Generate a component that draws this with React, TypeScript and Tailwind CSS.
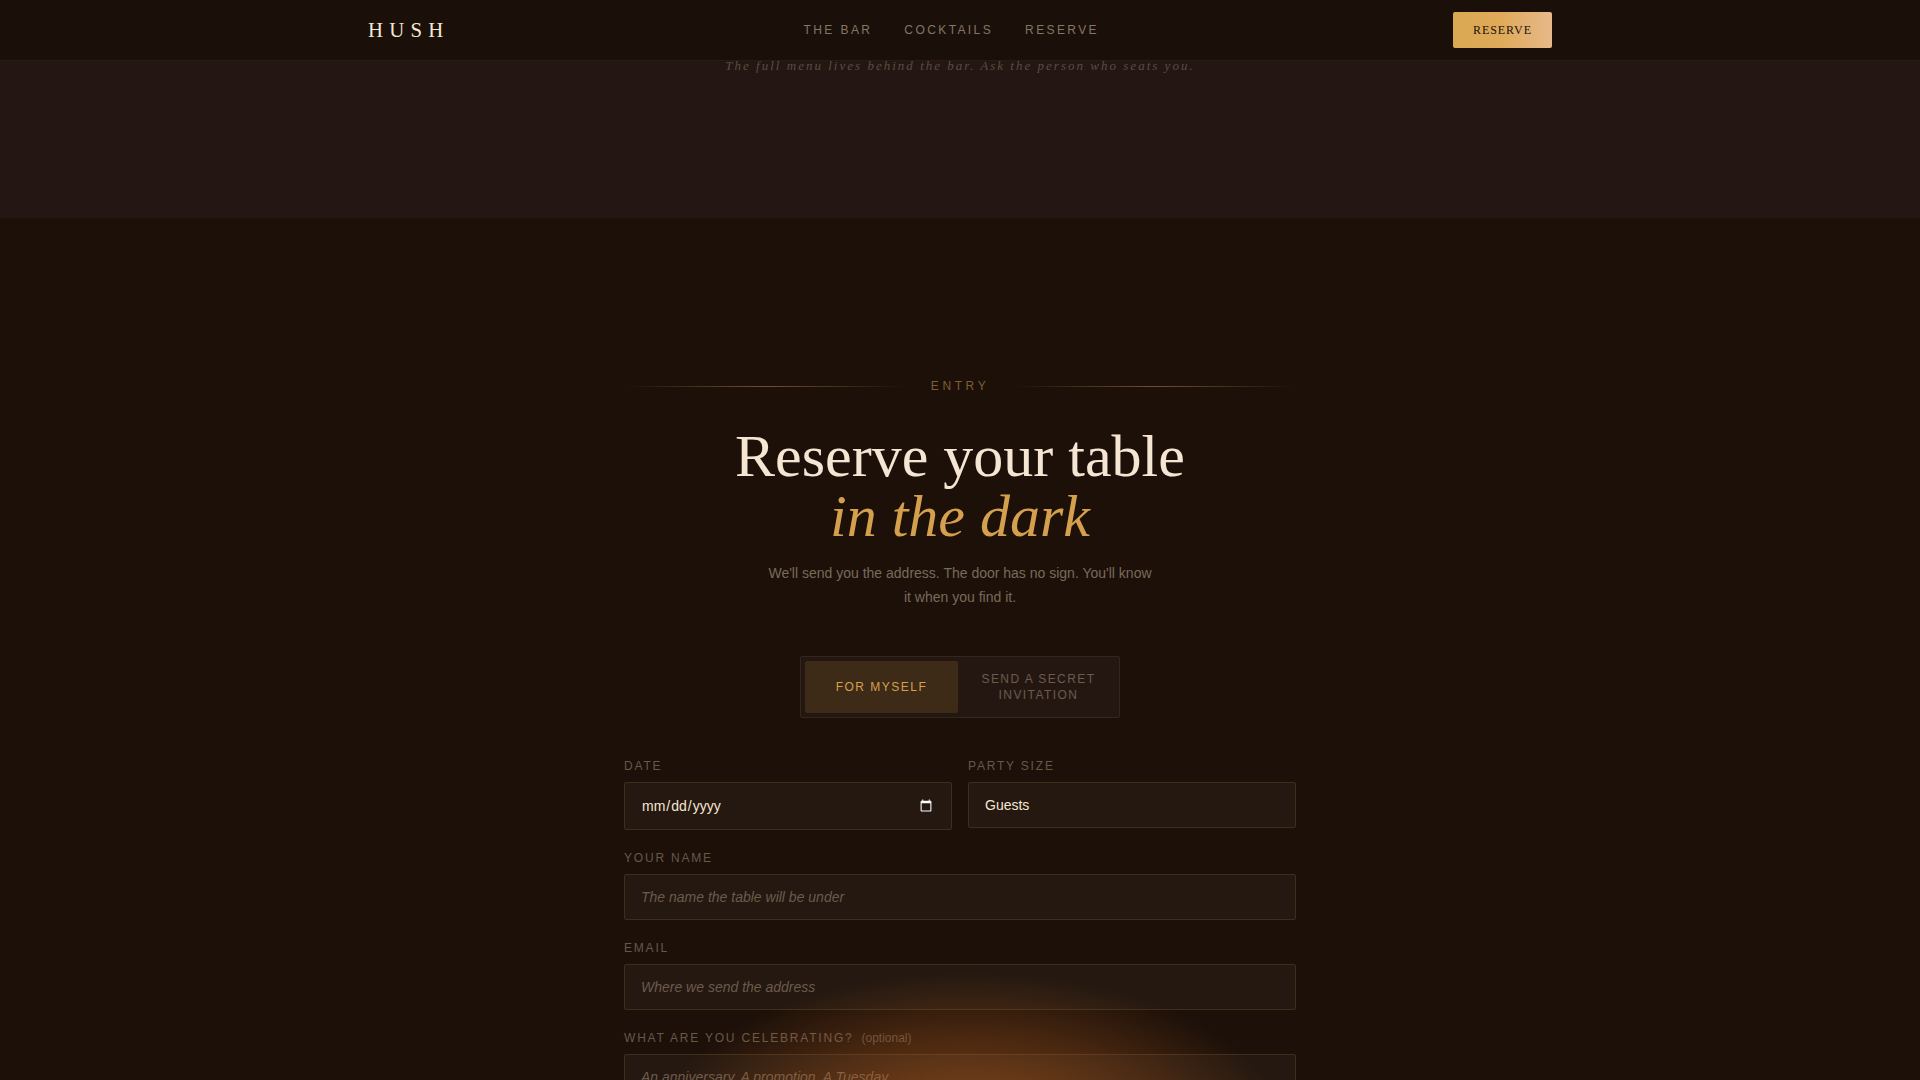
import React from 'react';

const sans = 'font-["Liberation_Sans",Arial,sans-serif]';
const serif = 'font-["Liberation_Serif","Times_New_Roman",serif]';

const labelClass = `block h-4 mb-2 text-[12px] leading-4 tracking-[0.15em] uppercase text-[#675849] ${sans}`;
const fieldClass = `block w-full bg-[#241810] border border-[#3d2e1b] rounded-[2px] px-4 py-3.5 text-[14px] leading-4 text-[#f5e6d3] outline-none placeholder:italic placeholder:text-[#6b5b4d] ${sans}`;

const App: React.FC = () => {
  return (
    <div className={`relative h-screen overflow-hidden bg-[#1c1009] ${sans}`}>
      <nav className="h-[61px] border-b border-[#2a1c10] bg-[#1b1009]">
        <div className="mx-auto flex h-[60px] w-[1184px] items-center justify-between">
          <a className={`text-[20.8px] tracking-[0.3em] text-[#f5e6d3] ${serif}`}>HUSH</a>
          <div className="flex gap-8 text-[12px] tracking-[0.2em] text-[#857565]">
            <a>THE BAR</a>
            <a>COCKTAILS</a>
            <a>RESERVE</a>
          </div>
          <button className={`h-9 w-[99px] rounded-[2px] bg-gradient-to-r from-[#daa752] via-[#dfab5a] to-[#e8b88a] text-[12px] tracking-[0.08em] text-[#1c1009] ${serif}`}>
            RESERVE
          </button>
        </div>
      </nav>

      <section className="h-[157px] bg-[#241613] text-center">
        <p className={`text-[13px] leading-[10px] italic tracking-[0.155em] text-[#5c4c42] ${serif}`}>
          The full menu lives behind the bar. Ask the person who seats you.
        </p>
      </section>

      <section className="mx-auto w-[672px] pt-[160px]">
        <div className="flex items-center gap-6">
          <span className="h-px flex-1 bg-gradient-to-r from-transparent via-[#6f5227] to-transparent" />
          <span className="text-[12px] leading-4 tracking-[0.3em] text-[#7d5f34]">ENTRY</span>
          <span className="h-px flex-1 bg-gradient-to-r from-transparent via-[#6f5227] to-transparent" />
        </div>

        <h1 className={`mt-[32px] text-center text-[60px] leading-[60px] font-normal text-[#f5e6d3] ${serif}`}>
          Reserve your table
          <br />
          <em className="text-[#d4a04d]">in the dark</em>
        </h1>
        <p className="mx-auto mt-[16px] w-[390px] text-center text-[14px] leading-[23.5px] text-[#7a6a5a]">
          We'll send you the address. The door has no sign. You'll know it when you find it.
        </p>

        <div className="mx-auto mt-[47px] flex h-[62px] w-[320px] rounded-[2px] border border-[#33261a] bg-[#241712] p-1">
          <button className="w-[153px] rounded-[2px] bg-[#3d2a17] text-[12px] tracking-[0.125em] text-[#d4a04d]">
            FOR MYSELF
          </button>
          <button className="flex-1 pl-1 text-[12px] leading-4 tracking-[0.12em] text-[#6b5b4d]">
            SEND A SECRET INVITATION
          </button>
        </div>

        <form className="mt-10 flex flex-col gap-5">
          <div className="grid grid-cols-2 items-start gap-4">
            <div>
              <label className={labelClass}>Date</label>
              <input type="date" className={`${fieldClass} h-12 [color-scheme:dark]`} />
            </div>
            <div>
              <label className={labelClass}>Party size</label>
              <select className={`${fieldClass} appearance-none`}>
                <option>Guests</option>
              </select>
            </div>
          </div>
          <div>
            <label className={labelClass}>Your name</label>
            <input type="text" placeholder="The name the table will be under" className={fieldClass} />
          </div>
          <div>
            <label className={labelClass}>Email</label>
            <input type="email" placeholder="Where we send the address" className={fieldClass} />
          </div>
          <div>
            <label className={labelClass}>
              What are you celebrating?
              <span className="ml-2 text-[12px] normal-case tracking-normal text-[#5c4c42]">(optional)</span>
            </label>
            <textarea rows={3} placeholder="An anniversary. A promotion. A Tuesday." className={`${fieldClass} resize-none`} />
          </div>
        </form>
      </section>

      {/* warm glow sitting over the bottom of the form */}
      <div className="pointer-events-none absolute bottom-[-220px] left-[calc(50%+10px)] h-[330px] w-[640px] -translate-x-1/2 bg-[radial-gradient(ellipse_at_center,rgba(200,105,35,0.62)_0%,rgba(200,105,35,0.24)_45%,transparent_70%)]" />
    </div>
  );
};

export default App;
